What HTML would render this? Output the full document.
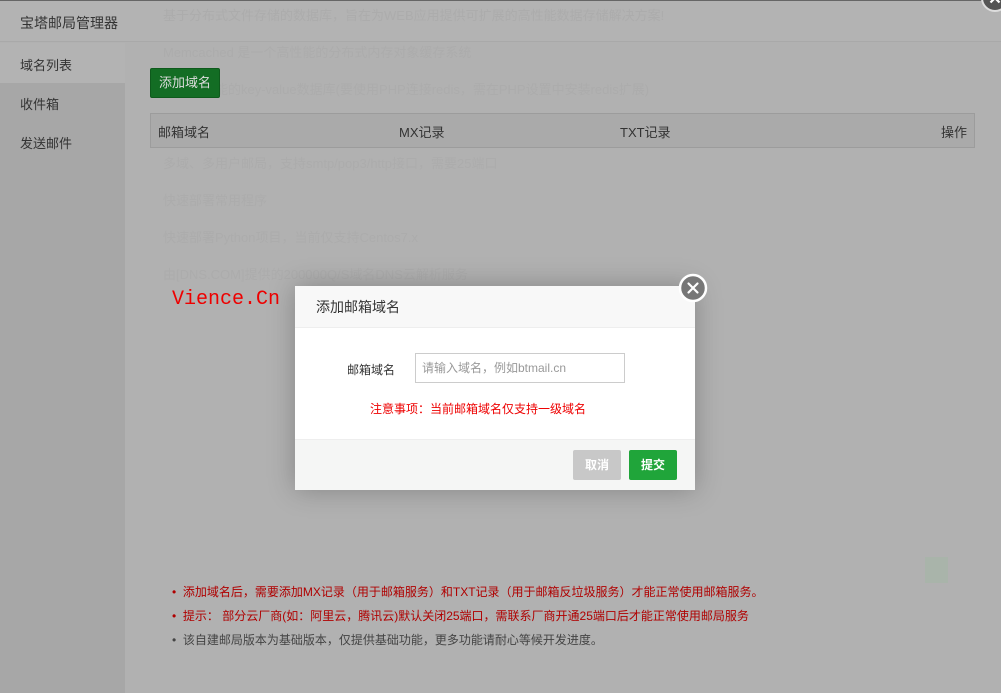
<!DOCTYPE html>
<html><head><meta charset="utf-8"><style>
*{margin:0;padding:0;box-sizing:border-box}
body{width:1001px;height:693px;overflow:hidden;background:#b1b1b1;font-family:"Liberation Sans","Noto Sans CJK SC",sans-serif;font-size:13px;position:relative;color:#333}
.abs{position:absolute}
.ghost{position:absolute;color:#acacac;font-size:13px;white-space:nowrap}
</style></head><body>
<div class="abs" style="left:0;top:0;width:1001px;height:1px;background:#666"></div>
<div class="abs" style="left:0;top:1px;width:1001px;height:41px;background:#b3b3b3;border-bottom:1px solid #a9a9a9"></div>
<div class="abs" style="left:20px;top:13px;font-size:14px;color:#333">宝塔邮局管理器</div>
<div class="abs" style="left:0;top:83px;width:125px;height:610px;background:#a7a7a7"></div>
<div class="abs" style="left:0;top:43px;width:125px;height:40px;background:#b3b3b3"></div>
<div class="abs" style="left:20px;top:55px;color:#333">域名列表</div>
<div class="abs" style="left:20px;top:94px;color:#333">收件箱</div>
<div class="abs" style="left:20px;top:133px;color:#333">发送邮件</div>

<div class="ghost" style="left:163px;top:5px">基于分布式文件存储的数据库，旨在为WEB应用提供可扩展的高性能数据存储解决方案!</div>
<div class="ghost" style="left:163px;top:42px">Memcached 是一个高性能的分布式内存对象缓存系统</div>
<div class="ghost" style="left:163px;top:79px">一个高性能的key-value数据库(要使用PHP连接redis，需在PHP设置中安装redis扩展)</div>
<div class="ghost" style="left:163px;top:153px">多域、多用户邮局，支持smtp/pop3/http接口，需要25端口</div>
<div class="ghost" style="left:163px;top:190px">快速部署常用程序</div>
<div class="ghost" style="left:163px;top:227px">快速部署Python项目，当前仅支持Centos7.x</div>
<div class="ghost" style="left:163px;top:264px">由[DNS.COM]提供的200000Q/S域名DNS云解析服务</div>

<div class="abs" style="left:150px;top:68px;width:70px;height:30px;background:#136d24;border:1px solid #0e5a1c;border-radius:2px;color:#ddd;text-align:center;line-height:28px">添加域名</div>
<div class="abs" style="left:150px;top:113px;width:825px;height:35px;background:#aaaaaa;border:1px solid #9c9c9c"></div>
<div class="abs" style="left:158px;top:122px">邮箱域名</div>
<div class="abs" style="left:399px;top:122px">MX记录</div>
<div class="abs" style="left:620px;top:122px">TXT记录</div>
<div class="abs" style="left:941px;top:122px">操作</div>

<div class="abs" style="left:925px;top:557px;width:23px;height:26px;background:#a9b4aa"></div>

<div class="abs" style="left:172px;top:583px;color:#b00000;font-size:12px">• &nbsp;添加域名后，需要添加MX记录（用于邮箱服务）和TXT记录（用于邮箱反垃圾服务）才能正常使用邮箱服务。</div>
<div class="abs" style="left:172px;top:607px;color:#b00000;font-size:12px">• &nbsp;提示： 部分云厂商(如：阿里云，腾讯云)默认关闭25端口，需联系厂商开通25端口后才能正常使用邮局服务</div>
<div class="abs" style="left:172px;top:631px;color:#444;font-size:12px">• &nbsp;该自建邮局版本为基础版本，仅提供基础功能，更多功能请耐心等候开发进度。</div>

<div class="abs" style="left:172px;top:288px;color:#e00;font-family:'Liberation Mono',monospace;font-size:20px">Vience.Cn</div>

<div class="abs" style="left:295px;top:286px;width:400px;height:204px;background:#fff;box-shadow:0 0 25px rgba(0,0,0,.25)">
 <div style="height:42px;background:#f8f8f8;border-bottom:1px solid #eee;padding-left:21px;line-height:42px;font-size:14px;color:#333">添加邮箱域名</div>
 <div class="abs" style="left:52px;top:75px;font-size:12px;color:#333">邮箱域名</div>
 <div class="abs" style="left:120px;top:67px;width:210px;height:30px;border:1px solid #ccc;font-size:12px;color:#999;line-height:28px;padding-left:6px">请输入域名，例如btmail.cn</div>
 <div class="abs" style="left:75px;top:114px;font-size:12px;color:#e00">注意事项：当前邮箱域名仅支持一级域名</div>
 <div class="abs" style="left:0;top:153px;width:400px;height:51px;background:#f5f6f5;border-top:1px solid #eee"></div>
 <div class="abs" style="left:278px;top:164px;width:48px;height:30px;background:#c8c8c8;border-radius:2px;color:#fff;text-align:center;line-height:30px;font-size:12px;font-weight:bold">取消</div>
 <div class="abs" style="left:334px;top:164px;width:48px;height:30px;background:#20a53a;border-radius:2px;color:#fff;text-align:center;line-height:30px;font-size:12px;font-weight:bold">提交</div>
</div>
<svg class="abs" style="left:678px;top:273px" width="30" height="30" viewBox="0 0 30 30"><circle cx="15" cy="15" r="13" fill="#777" stroke="#fff" stroke-width="2.5"/><path d="M10.5 10.5L19.5 19.5M19.5 10.5L10.5 19.5" stroke="#fff" stroke-width="2.2" stroke-linecap="round"/></svg>
<svg class="abs" style="left:980px;top:-17px" width="30" height="30" viewBox="0 0 30 30"><circle cx="15" cy="15" r="13" fill="#555" stroke="#ddd" stroke-width="2"/><path d="M10.5 10.5L19.5 19.5M19.5 10.5L10.5 19.5" stroke="#fff" stroke-width="2.2"/></svg>
</body></html>
